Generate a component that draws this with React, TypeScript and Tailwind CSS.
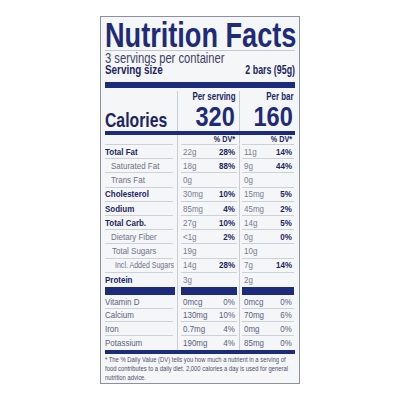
import React from "react";

const FONT = { fontFamily: '"Liberation Sans", Arial, sans-serif' };

type Row = {
  label: string;
  indent?: number;
  bold?: boolean;
  tight?: boolean;
  a: string;
  ap?: string;
  b: string;
  bp?: string;
  last?: boolean;
};

const rows: Row[] = [
  { label: "Total Fat", bold: true, a: "22g", ap: "28%", b: "11g", bp: "14%" },
  { label: "Saturated Fat", indent: 6, a: "18g", ap: "88%", b: "9g", bp: "44%" },
  { label: "Trans Fat", indent: 6, a: "0g", b: "0g" },
  { label: "Cholesterol", bold: true, a: "30mg", ap: "10%", b: "15mg", bp: "5%" },
  { label: "Sodium", bold: true, a: "85mg", ap: "4%", b: "45mg", bp: "2%" },
  { label: "Total Carb.", bold: true, a: "27g", ap: "10%", b: "14g", bp: "5%" },
  { label: "Dietary Fiber", indent: 6, a: "<1g", ap: "2%", b: "0g", bp: "0%" },
  { label: "Total Sugars", indent: 7, a: "19g", b: "10g" },
  { label: "Incl. Added Sugars", indent: 10, tight: true, a: "14g", ap: "28%", b: "7g", bp: "14%" },
  { label: "Protein", bold: true, a: "3g", b: "2g", last: true },
];

const micros = [
  { label: "Vitamin D", a: "0mcg", ap: "0%", b: "0mcg", bp: "0%" },
  { label: "Calcium", a: "130mg", ap: "10%", b: "70mg", bp: "6%" },
  { label: "Iron", a: "0.7mg", ap: "4%", b: "0mg", bp: "0%" },
  { label: "Potassium", a: "190mg", ap: "4%", b: "85mg", bp: "0%", last: true },
];

const L = "inline-block whitespace-nowrap scale-x-[0.84] origin-left";
const LT = "inline-block whitespace-nowrap scale-x-[0.74] origin-left";
const R = "inline-block whitespace-nowrap scale-x-[0.84] origin-right";

function NutRow({ r }: { r: Row }) {
  const line = r.last ? "" : "border-b border-[#cdd0d8]";
  return (
    <div className="flex h-[14.2px] text-[9.5px] leading-none">
      <div className="w-[72px] pr-[4px]">
        <div
          className={`h-full flex items-center ${line} ${r.bold ? "font-bold text-[#1c2562]" : "text-[#6d7188]"}`}
          style={{ paddingLeft: r.indent ?? 0 }}
        >
          <span className={r.tight ? LT : L}>{r.label}</span>
        </div>
      </div>
      <div className="w-[62px] border-l border-[#c9ccd4] pl-[3px] pr-[2px]">
        <div className={`h-full flex items-center justify-between pl-[2px] pr-[2px] ${line}`}>
          <span className={`${L} text-[#777b90]`}>{r.a}</span>
          <span className={`${R} font-bold text-[#1c2562]`}>{r.ap ?? ""}</span>
        </div>
      </div>
      <div className="flex-1 border-l border-[#c9ccd4] pl-[2px] pr-[1px]">
        <div className={`h-full flex items-center justify-between pl-[2px] pr-[2px] ${line}`}>
          <span className={`${L} text-[#777b90]`}>{r.b}</span>
          <span className={`${R} font-bold text-[#1c2562]`}>{r.bp ?? ""}</span>
        </div>
      </div>
    </div>
  );
}

function MicroRow({ r }: { r: (typeof micros)[number] }) {
  const line = r.last ? "" : "border-b border-[#cdd0d8]";
  return (
    <div className="flex h-[13.75px] text-[9.5px] leading-none text-[#596080]">
      <div className="w-[72px] pr-[4px]">
        <div className={`h-full flex items-center ${line}`}>
          <span className={L}>{r.label}</span>
        </div>
      </div>
      <div className="w-[62px] border-l border-[#c9ccd4] pl-[3px] pr-[2px]">
        <div className={`h-full flex items-center justify-between pl-[2px] pr-[2px] ${line}`}>
          <span className={L}>{r.a}</span>
          <span className={R}>{r.ap}</span>
        </div>
      </div>
      <div className="flex-1 border-l border-[#c9ccd4] pl-[2px] pr-[1px]">
        <div className={`h-full flex items-center justify-between pl-[2px] pr-[2px] ${line}`}>
          <span className={L}>{r.b}</span>
          <span className={R}>{r.bp}</span>
        </div>
      </div>
    </div>
  );
}

export default function App() {
  return (
    <div className="w-[400px] h-[400px] bg-white pt-[16px]" style={FONT}>
      <div className="mx-auto w-[200px] h-[368px] border border-[#8d919c] bg-[#f5f6f8] px-[4px] pt-[2px] flex flex-col">
        <div className="h-[31px] text-[35px] leading-[31px] font-bold text-[#1d2b78] whitespace-nowrap">
          <span className="inline-block scale-x-[0.775] origin-left">Nutrition Facts</span>
        </div>
        <div className="h-px bg-[#c4c7cf]" />
        <div className="h-[12px] mt-[1px] text-[14px] leading-[12px] text-[#3b4066]">
          <span className="inline-block whitespace-nowrap scale-x-[0.8] origin-left">3 servings per container</span>
        </div>
        <div className="h-[12px] flex justify-between text-[13px] leading-[12px] font-bold text-[#1c2562]">
          <span className="inline-block whitespace-nowrap scale-x-[0.76] origin-left">Serving size</span>
          <span className="inline-block whitespace-nowrap scale-x-[0.68] origin-right">2 bars (95g)</span>
        </div>
        <div className="h-[6px] bg-[#1d2c7a] mt-[6px]" />
        <div className="flex h-[43px]">
          <div className="w-[72px] flex items-end pb-[1px]">
            <span className="inline-block whitespace-nowrap scale-x-[0.75] origin-left text-[21px] leading-none font-bold text-[#1c2562]">
              Calories
            </span>
          </div>
          <div className="w-[62px] mt-[3px] border-l border-[#c9ccd4] pr-[4px] flex flex-col items-end">
            <span className="inline-block whitespace-nowrap scale-x-[0.79] origin-right text-[10px] leading-none font-bold text-[#1c2562] mt-[1px]">
              Per serving
            </span>
            <span className="inline-block scale-x-[0.84] origin-right text-[28px] leading-none font-bold text-[#1d2b78] mt-[1px]">
              320
            </span>
          </div>
          <div className="flex-1 mt-[3px] border-l border-[#c9ccd4] pr-[2px] flex flex-col items-end">
            <span className="inline-block whitespace-nowrap scale-x-[0.79] origin-right text-[10px] leading-none font-bold text-[#1c2562] mt-[1px]">
              Per bar
            </span>
            <span className="inline-block scale-x-[0.84] origin-right text-[28px] leading-none font-bold text-[#1d2b78] mt-[1px]">
              160
            </span>
          </div>
        </div>
        <div className="h-[4px] bg-[#1d2c7a]" />
        <div className="flex h-[10px] text-[8.5px] leading-none font-bold text-[#1c2562]">
          <div className="w-[72px] pr-[4px]">
            <div className="h-full border-b border-[#cdd0d8]" />
          </div>
          <div className="w-[62px] border-l border-[#c9ccd4] pl-[3px] pr-[2px]">
            <div className="h-full border-b border-[#cdd0d8] flex items-center justify-end pr-[2px]">
              <span className="inline-block whitespace-nowrap scale-x-[0.85] origin-right">% DV*</span>
            </div>
          </div>
          <div className="flex-1 border-l border-[#c9ccd4] pl-[2px] pr-[1px]">
            <div className="h-full border-b border-[#cdd0d8] flex items-center justify-end pr-[2px]">
              <span className="inline-block whitespace-nowrap scale-x-[0.85] origin-right">% DV*</span>
            </div>
          </div>
        </div>
        {rows.map((r) => (
          <NutRow key={r.label} r={r} />
        ))}
        <div className="flex h-[8px]">
          <div className="w-[72px] pr-[2px]">
            <div className="h-full bg-[#1d2c7a]" />
          </div>
          <div className="w-[62px] border-l border-[#c9ccd4] pl-[3px] pr-[2px]">
            <div className="h-full bg-[#1d2c7a]" />
          </div>
          <div className="flex-1 border-l border-[#c9ccd4] pl-[2px] pr-[1px]">
            <div className="h-full bg-[#1d2c7a]" />
          </div>
        </div>
        {micros.map((r) => (
          <MicroRow key={r.label} r={r} />
        ))}
        <div className="h-[4px] bg-[#1d2c7a]" />
        <div className="text-[7.5px] leading-[9px] text-[#4a4f6e] pt-[1px] whitespace-nowrap">
          <div className="inline-block scale-x-[0.78] origin-left">
            * The % Daily Value (DV) tells you how much a nutrient in a serving of
            <br />
            food contributes to a daily diet. 2,000 calories a day is used for general
            <br />
            nutrition advice.
          </div>
        </div>
      </div>
    </div>
  );
}
